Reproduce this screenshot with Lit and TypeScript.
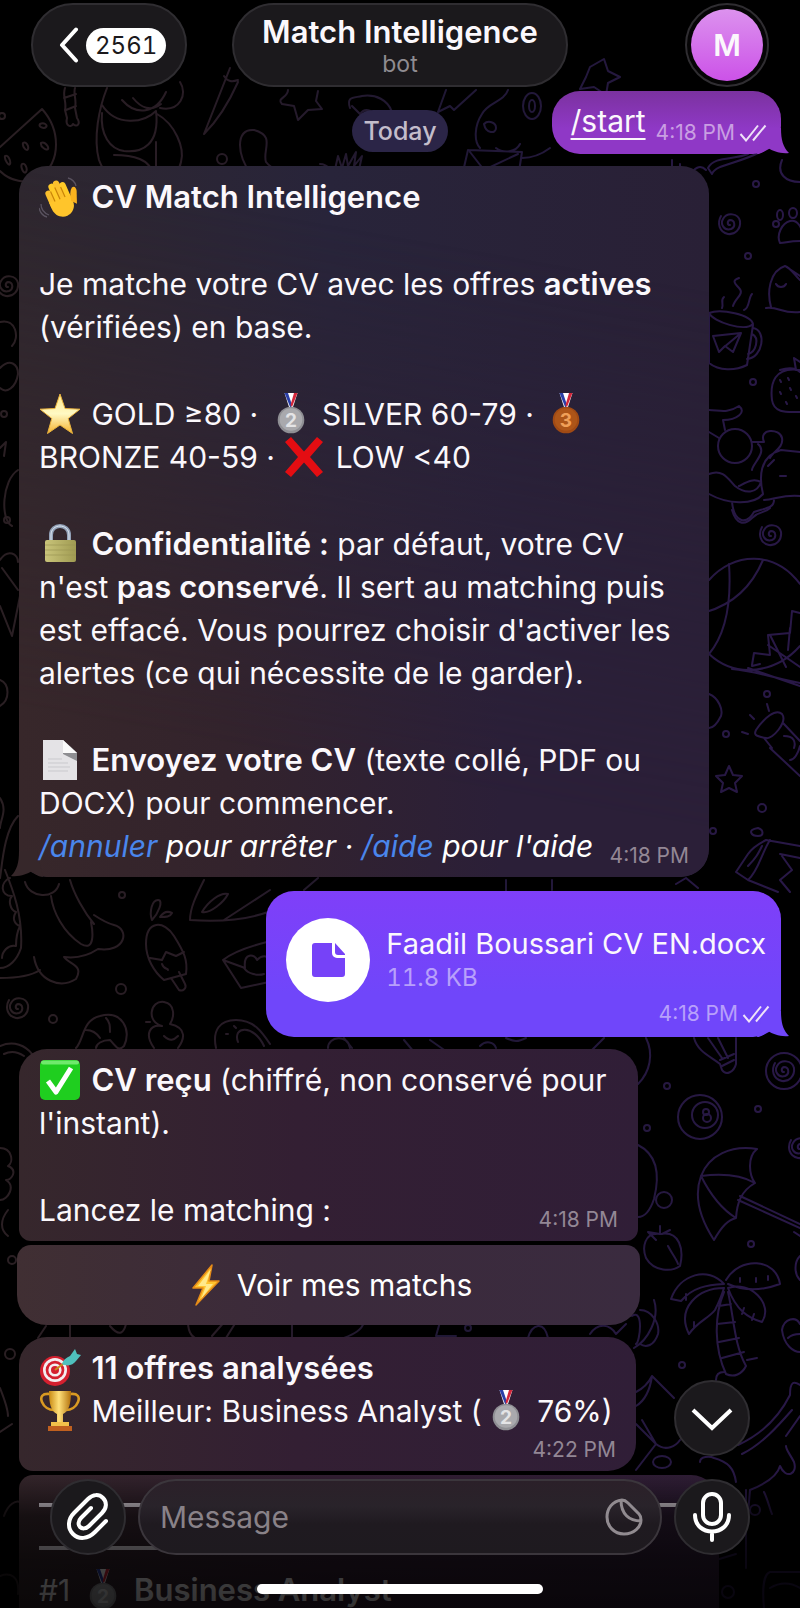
import { LitElement, html, css, svg } from "lit";
import { customElement, state } from "lit/decorators.js";

/* ---------- emoji drawn as small vector pictures ---------- */

const emoji = (label: string, body: unknown, kind = "") => html`<svg
  class="emoji ${kind}" viewBox="0 0 42 42" role="img" aria-label=${label}>${body}</svg>`;

const wave = () => emoji("Main qui salue", svg`
  <g transform="rotate(-24 22 24)">
    <rect x="10" y="10" width="6.400" height="20" rx="3.200" fill="#fbc02d"/>
    <rect x="15.500" y="5" width="6.400" height="24" rx="3.200" fill="#ffca28"/>
    <rect x="21" y="4" width="6.400" height="24" rx="3.200" fill="#fbc02d"/>
    <rect x="26.500" y="8" width="6" height="20" rx="3" fill="#ffca28"/>
    <path d="M10 22h22.500v8c0 6-5 11-11 11S10 36 10 29z" fill="#ffc52b"/>
    <path d="M31 29c1-6 3-10 6-12 3-1 4 2 3 5l-5 12z" fill="#f9b21e"/>
    <path d="M15.900 12v11M21.400 10v13M26.900 12v11" stroke="#c98308" stroke-width="1.200" fill="none"/>
  </g>
  <path d="M2 28c0 5 3 9 8 11M0 32c1 4 4 8 8 9M29 2c4 1 7 4 8 8" stroke="#5a5360" stroke-width="1.300" fill="none"/>`);

const star = () => emoji("Étoile", svg`
  <path d="M21 1l5 14.500 15 .7-11.800 9.300 4.300 15L21 32 8.500 40.500l4.300-15L1 16.200l15-.7z" fill="url(#e-star)" stroke="#e9b23c" stroke-width="1" stroke-linejoin="round"/>`);

const medal = (rank: number) => emoji(`Médaille ${rank}`, svg`
  <path d="M14.500 0h13L23 14h-4z" fill="#fff"/>
  <path d="M14.500 0h3.500l4 12-1.500 3z" fill="#2a3fa8"/>
  <path d="M27.500 0H24l-3.500 12 1.500 2z" fill="#d3263a"/>
  <circle cx="21" cy="27" r="13.300" fill=${rank === 2 ? "#8f8f94" : "#a04a14"}/>
  <circle cx="21" cy="26.500" r="11.300" fill=${rank === 2 ? "#a9a9ad" : "#ad5518"}/>
  <text x="21" y="33.500" text-anchor="middle" font-size="19" font-weight="700" fill=${rank === 2 ? "#e4e4e6" : "#f0a058"}>${rank}</text>`, "medal");

const cross = () => emoji("Croix", svg`
  <path d="M8 1l13 14.500L34 1l6 5-13 15 13 15-6 5-13-14.500L8 41l-6-5 13-15L2 6z" fill="#e40d12"/>`);

const lock = () => emoji("Cadenas", svg`
  <path d="M12 19v-7c0-12 18-12 18 0v7" fill="none" stroke="#93a2b8" stroke-width="4"/>
  <path d="M12 19v-7c0-12 18-12 18 0v7" fill="none" stroke="#dfe8f3" stroke-width="1"/>
  <rect x="6" y="17" width="31" height="22" rx="2" fill="url(#e-lock)"/>
  <path d="M6 22h31M6 27h31M6 32h31" stroke="#9c9754" stroke-width=".7"/>`);

const page = () => emoji("Document", svg`
  <path d="M4 1h20l14 13v27H4z" fill="#e4e3e6"/>
  <path d="M24 1l14 13v8L24 15z" fill="#8e8e92"/>
  <path d="M24 1l14 13H24z" fill="#fafafa"/>
  <path d="M9 20h14M9 24h20M9 28h22M9 32h20" stroke="#c9c9cd" stroke-width="1"/>`);

const check = () => emoji("Validé", svg`
  <rect x="1" y="1" width="40" height="40" rx="5" fill="#1fce1f"/>
  <rect x="2" y="1.500" width="38" height="4" rx="2" fill="#6fe96c"/>
  <path d="M9 22l8 11L32 9" fill="none" stroke="#fff" stroke-width="5" stroke-linejoin="round"/>`);

const bolt = () => emoji("Éclair", svg`
  <path d="M27 1L8 24h10l-7 17 23-24H24z" fill="#ffc42e" stroke="#e58a17" stroke-width="1.500" stroke-linejoin="round"/>
  <path d="M26 5L13 22h8l-5 13 12-15h-7z" fill="#ffe98a"/>`);

const target = () => emoji("Cible", svg`
  <circle cx="16" cy="24" r="15" fill="#d4202f"/>
  <circle cx="16" cy="23" r="12" fill="#f4eef0"/><circle cx="16" cy="23" r="9.300" fill="#d4202f"/>
  <circle cx="16" cy="23" r="6.600" fill="#f4eef0"/><circle cx="16" cy="23" r="4" fill="#d4202f"/>
  <path d="M16 23L33 10" stroke="#c98a1b" stroke-width="2"/>
  <path d="M23 17c1-4 4-6 8-8l5-7 2 5 4 1-5 6c-3 4-8 6-14 3z" fill="#4fc0bd"/>`);

const trophy = () => emoji("Trophée", svg`
  <path d="M11 4C3 3 1 7 3 12s7 8 12 8M31 4c8-1 10 3 8 8s-7 8-12 8" fill="none" stroke="#d99a22" stroke-width="2.600"/>
  <path d="M10 1h22c0 13-2 20-8 23v9h-6v-9C12 21 10 14 10 1z" fill="url(#e-cup)"/>
  <rect x="12" y="32" width="18" height="4" fill="#f2c14a"/>
  <path d="M9 36h24v5H9z" fill="#c0601f"/>`);

/* ---------- interface icons ---------- */

const ticks = () => html`<svg class="ticks" viewBox="0 0 28 18" aria-label="Lu" role="img">
  <path d="M1.500 10l5.500 6.500L19 1.500M14 16.500L26.500 1.500"/></svg>`;

const tail = (side: string) => html`<svg class="tail ${side}" viewBox="0 0 32 26" aria-hidden="true">
  <path d="M6 0H24C24 12 26 19 32 25C23 26 16 23 11 20C8 23 4 26 0 26Z"/></svg>`;

const spiral = (x: number, y: number) => svg`
  <path d="M${x} ${y}c-3 0-3-4 0-5 5 0 6 7 1 9-7 2-11-5-8-10 4-7 15-6 17 2 1 8-5 14-12 13-9-2-11-11-7-18"/>`;

const dots: [number, number, number][] = [
  [222, 159, 5], [756, 184, 3], [748, 256, 3], [753, 382, 3], [767, 694, 3], [726, 734, 3],
  [762, 808, 4], [713, 831, 3], [122, 895, 3], [121, 989, 5], [53, 1019, 4], [667, 1086, 3],
  [758, 1109, 3], [647, 1128, 3], [751, 1244, 3], [682, 1365, 3], [468, 1328, 3], [4, 414, 3],
  [7, 520, 3], [755, 1510, 5], [728, 1592, 6], [2, 116, 3], [12, 1260, 4], [10, 1354, 5],
];

const wallpaper = () => html`<svg class="wallpaper" viewBox="0 0 800 1608" preserveAspectRatio="xMidYMin slice" aria-hidden="true">
  <defs>
    <linearGradient id="ink" gradientUnits="userSpaceOnUse" x1="0" y1="0" x2="800" y2="0">
      <stop offset="0" stop-color="#2a1f23"/><stop offset=".25" stop-color="#281c25"/>
      <stop offset=".55" stop-color="#201835"/><stop offset="1" stop-color="#291848"/>
    </linearGradient>
    <linearGradient id="e-star" x2="0" y2="1"><stop stop-color="#ffe98a"/><stop offset=".5" stop-color="#fff9c4"/><stop offset="1" stop-color="#f5b32f"/></linearGradient>
  </defs>
  <g fill="none" stroke="url(#ink)" stroke-width="2" stroke-linecap="round" stroke-linejoin="round">
    ${dots.map(([x, y, r]) => svg`<circle cx=${x} cy=${y} r=${r}/>`)}
    <!-- header strip -->
    <path d="M0 147L42 109c18 20 20 52-2 68-14 8-30 4-40-6M40 124c4-2 8 1 6 3s-8 0-6-3zM23 143c3-2 6 3 5 6s-6-2-5-6zM41 143c4-2 8 4 7 6s-8-2-7-6zM5 156c3-2 6 5 5 8s-6-5-5-8zM22 164c3-2 6 5 4 8s-6-5-4-8z"/>
    <path d="M65 88c-3 8 2 14 0 22l2 8c-2 8 4 10 6 6 4 4 8 0 4-6l-2-10c2-8-2-14 0-20M64 98l12-4M66 110l10-4"/>
    <path d="M107 88c-8 20-14 50-8 72 3 9 8 14 14 18M102 105c14 22 42 18 54 6 4 34-14 42-32 40-14-2-24-16-22-38M157 114c18 10 28 34 24 48-2 10-8 14-10 14M114 155c18 0 38 4 38 20M156 142v32M122 100c14 16 34 14 44-8M160 108c20 4 28-14 20-26M133 98c8 10 18 14 28 6"/>
    <path d="M230 68l-26 66c14-14 26-34 34-52M224 76c4 6 8 6 14 4"/>
    <path d="M288 90c0 8-12 8-6 14l12 2 4 14 10-10 14-1-6-8 2-10M350 108c-4-12 4-10 12-12 14-2 26 4 30 16M352 106l8 8c6-8 14-2 18 4"/>
    <path d="M250 172c-12-14-16-44 4-42 22 6 8 20 12 32 6 8 14 8 22 14M320 164c8 0 10 6 16 10M334 174l4-18 4 12 4-14 2 12 8-14-2 14 8-10-4 18"/>
    <path d="M438 112l8-22M438 112l12-6 4 4 22-20M508 90c-4 12-20 12-26 24-8 12-8 28-2 34M484 124c4-4 12-2 12 4s-10 6-12-4zM496 148c8 6 20 4 24-4M468 150l54 2-4 26M468 150l-6 26M470 152l14 18 34-16M522 158c10 0 20-4 28-10"/>
    <ellipse cx="532" cy="106" rx="9" ry="13"/><ellipse cx="532" cy="106" rx="3" ry="6"/>
    <path d="M590 67l14-8 4 12 12 6-12 6-2 12-12-8-14 2 6-12z M672 178v-18M680 178v-14M690 176c4-8 10-12 16-6"/>
    <path d="M712 174l-4-6c6-12 26-8 40-14M712 174c4-10 26-10 48-22M782 160c-6 14 4 22 18 22"/>
    <!-- right column -->
    ${spiral(730, 225)}
    <path d="M780 243c-4-8 2-20 10-22s12 8 12 12M780 243c6 0 8-2 20-2"/><circle cx="776" cy="224" r="3"/><ellipse cx="780" cy="215" rx="3" ry="5"/><ellipse cx="793" cy="213" rx="4" ry="5"/>
    <path d="M771 307c-4-14-2-36 14-41l15 10M766 308c12-2 16 6 34 4M776 284c2 4 8 4 10 0M785 266c6 2 10 10 15 14"/>
    <path d="M733 306c2-8 12-12 6-18s-6-8 0-10M722 308c2-4-2-8 2-11M744 310c6-2 4-12 8-16"/>
    <path d="M709 313c12-5 42 2 44 11-8 8-40-2-44-11v50c10 8 26 8 38 2l6-40M753 328c14 2 10 30-6 31M752 334c8 4 4 18-4 20M713 336l28-3-8 19-8-6-6 6zM741 333l-18 15"/>
    <path d="M780 370c12-4 18 0 20 2M796 370l-2-12 6 4M800 370c-26-4-30 14-28 30 2 14 16 12 28 12M780 380l1 2M788 378l1 2M780 392l1 2M790 388l1 2M786 402l1 2M796 396l1 2"/>
    <circle cx="735" cy="446" r="17"/><path d="M709 410c10 0 18 4 30-4 8 6-2 14-16 14l2 10M709 432l10 6M752 442h12c-6-14 16-14 18-4s-10 14-12 20M758 444c10 8-6 20-6 26M709 474c14-6 20 6 26 12 10 8 22 8 26-4-8-4-14 0-22 4M709 494c18 10 44 12 54 0-4-16-4-38 18-44l19 2M732 502c2 20 14 24 22 10 12-4 20-4 20-12M764 500c10 0 20-6 36-4M768 466l6-6M780 476h6"/>
    <path d="M732 510c4 14 12 16 20 8s12-4 18-10"/>
    ${spiral(771, 536)}
    <path d="M709 580c24-28 66-30 91 4M709 654c20-24 22-60 20-90M706 612c28-8 46-26 57-52M709 654c28 26 68 18 91-8M752 665l2-12 16 2-2-20 22-2 2-22 8 2M760 664l-8 2M770 635l16 32M790 628l-2 22M732 669c24 2 46 10 68 14M748 668l52 18M768 645l32 22"/>
    <path d="M709 694c10 4 14 16 12 22-4 8-8 12-12 12M767 704l2 7M750 715l4 4M742 732l6 2"/>
    <path d="M756 730c8-12 20-22 26-16 6 8-10 26-16 24-12-2-12-4-10-8M772 748l-8-10M783 723l17 18M770 748l30 28M784 736c10 0 12 6 10 12M790 760c4 0 8-6 10-14"/>
    <path d="M729 766l4 9 9 1-7 7 2 9-8-4-8 4 2-9-7-7 9-1z"/>
    <path d="M800 846l-34-6c-8 4-14 8-18 14l-12 18 12 8c10-8 14-28 22-40M748 880l30 12M758 828c6 2 6 8 0 8s-12-6 0-8zM762 846c-4 8-6 12-14 20M780 854l20 4M782 856l10 14-12 10 10 12"/>
    <!-- left edge -->
    ${spiral(8, 287)}
    <path d="M0 322c16-4 20 16 12 24M0 368c10-10 18-4 18 6-2 14-12 20-18 14M0 448l6-6-2 14M18 470c-16 10-18 50-6 56M0 560c8-12 18-6 18 2M0 606l12 30 8-40M2 568l16 22M0 680c10 4 10 20 0 26M0 798c8 12 0 22 0 30M18 816c-14 14-16 50-18 62"/>
    <!-- gap between the welcome and the file -->
    <path d="M25 882c4 16 30 18 34 2M5 870c8 20 18 46 16 78-4 12-12 20-21 20M0 978c24 0 34-4 40-8M34 957c4 24 26 32 42 22 8-14-6-14-12-22 16 2 28-4 34-8 28 4 32-20 16-24-8-2-14-6-20-10M70 880c4 14 14 32 24 44M51 896c2 16 12 36 30 48 14 8 12-12 10-22M10 878c-10 4-10 18 2 18-4 4-2 14 4 16-4 6-2 12 4 14-4 8-4 14-4 20-8-2-14 6-14 12"/>
    <path d="M152 920c-3-8 0-20 6-20s0 14-6 20zM160 917c4-6 8-6 12-4-2 4-6 4-12 4zM146 944c0-24 18-24 28-8 10 16 14 24 12 38l-22 6c-10-8-18-22-18-36zM150 958l12 2 4-8 10 4 8-4M171 978l8 12c4 2 8-2 6-6l-6-12M162 964c2 6 6 4 6 6"/>
    <path d="M204 880c-8 16-14 28-14 40 30 2 56 0 78-8M224 920l46-30M202 912c6-10 18-20 26-18-4 8-18 20-26 18z M267 942c-16 4-34 10-44 18l18 28 28-6M223 960l22 8c-2-16 10-14 12-8 6-6 12-4 14 2M244 968c4 6 14 8 20 6"/>
    ${spiral(18, 1009)}
    <path d="M76 1048c8-8 6-28 24-32 22-6 32 14 24 30-6 6-8 0-14-6-8 0-14 4-14 8M86 1030c6 0 10 2 14 8M106 1018c4 4 4 8 4 14M0 1046c14-6 26 0 32 8M4 1054c8-4 14-2 20 2M154 1048c-10-14-4-24 8-22-16-4-12-26 2-24 12 2 10 16 6 22 18 4 14 16 8 24M150 1022h-4M164 1036c6 6 10 4 14 0M216 1048c-4-18 4-28 20-28 18 0 26 12 34 24M238 1042c-6-16 16-18 26 4M226 1034h2M234 1026l2 2"/>
    <path d="M328 1048c0-12 20-14 22 0M344 1038l8 10M404 1040l10 12M430 1040l20 14M480 1046c6-6 14-4 16 2M506 1038c8 4 12 4 20 0M604 1038l-16 16M506 880v12M552 880v10M318 878l-14 12M676 884l10-6 12 10"/>
    <!-- right side under the file -->
    <path d="M646 1038c8 16 4 34-8 46M694 1038c4 14 16 18 26 26l2 6c4 6 12 2 14-6v-26M708 1038l14 20M718 1038l10 20M720 1060l14-6M722 1066l12-6"/>
    ${spiral(784, 1072)}<circle cx="784" cy="1071" r="18"/>
    <circle cx="700" cy="1117" r="22"/><circle cx="705" cy="1115" r="13"/><circle cx="706" cy="1112" r="3"/><circle cx="707" cy="1118" r="4"/>
    ${spiral(800, 1149)}
    <path d="M638 1145c24 12 20 38 16 54-4 12-10 18-16 18"/><circle cx="664" cy="1200" r="8"/>
    <path d="M757 1149c-26-4-48 6-56 27-8 22 0 44 13 64M757 1149c-10 8-8 26-2 34-14-8-30-10-54-7M701 1176c10 20 22 34 35 42-8 2-14 8-22 22M755 1183c-14 8-18 20-19 35M738 1200l62 28M740 1196l60 28M794 1232l6 4"/>
    <path d="M660 1234c-16-2-18 14-14 24 8 14 26 14 34 8 4-16 0-36-20-32zM660 1234l-12-2 8 8M660 1234v-8M662 1234l8-4M668 1246c4 8 8 12 10 18"/>
    <path d="M724 1284c-16-18-44-10-53 15l10 2c12-14 26-16 43-17zM726 1280c14-24 50-22 54 4-16 6-34 8-52 0M724 1288c-26 0-48 20-35 46 8-12 20-16 26-24 4-8 6-12 9-22zM728 1288c22-8 46 16 34 34-14-4-26-12-34-34M724 1292c-10 24-10 56 2 82 8 4 16 0 20-8-12-22-12-48-18-74M719 1306l12-2M717 1324l18-2M719 1342l20-4M722 1358l22-6M716 1380c0-6 4-8 8-8M747 1360l10-2M686 1300v-6M694 1328v-6M740 1282v-4M756 1282v-4M768 1280v-4M744 1308l-2 6M754 1314l-2 6"/>
    <path d="M640 1310c12 0 20 14 18 24-4 12-12 14-18 10M632 1316c12-8 8 26 4 28M800 1256c-6 6-6 18 0 24M782 1330c2-12 14-14 18-6M782 1330c2 16 12 22 18 22M788 1338c4-4 8-4 12-4"/>
    <path d="M636 1406c10-6 14-16 16-30l22 22M652 1376c-4 8-8 12-16 16M636 1424l20 20-20 26M656 1444l-14-24M656 1444c10 8 20 2 24-4"/><ellipse cx="662" cy="1462" rx="9" ry="6"/>
    <path d="M700 1462c0-6 10-6 14-4 14 4 20 10 22 24M738 1445c26-12 42-30 52-50 0-14 4-14 10-10M742 1454c20-10 36-28 50-44M750 1490c20-8 28-16 30-24 6 14 18 8 14-4-4-8-8-12-8-16M750 1490l-2 24M786 1436l14-20M764 1492c4 8 6 18 8 22"/>
    <path d="M764 1608c-2-20 0-34 6-36h30M770 1588c10-6 20-6 30 0M4 1516c4-12 12-16 16-14M0 1576c10-4 20 0 18 18M746 1490v78M716 1560l20-6"/>
    <!-- gap above the results -->
    <path d="M46 1326l-8 12M70 1318v20M110 1326c10 12 14 6 16-2M188 1322c0 12 6 18 12 16M212 1336l14-16M236 1322l-10 16M292 1322v16M344 1338c10-4 18-8 20-16M440 1322l-4 14h20M528 1338c4-14 16-18 20 0M590 1334c8-12 20-10 26 0l10-10M634 1348c14-8 26-30 20-48"/>
    <path d="M0 1388c4 10 8 20 8 28M0 1432l12-8M0 1148c12 0 14 14 8 18 10 4 4 14-2 14 10 6 2 20-6 20M8 1210c-8 10-8 20 0 26"/>
  </g>
</svg>`;

@customElement("app-root")
export class AppRoot extends LitElement {
  @state() private draft = "";

  static styles = css`
    :host {
      --ink: #fbf8fc;
      --muted: #938795;
      --glass: #1b191c;
      display: block;
      position: relative;
      height: 100vh;
      overflow: hidden;
      background: #000;
      color: var(--ink);
      font-family: Inter, "Liberation Sans", sans-serif;
      font-size: 30px;
      line-height: 43px;
    }
    *, *::before, *::after { box-sizing: border-box; }
    p, h1, h2 { margin: 0; font: inherit; }
    a { color: inherit; }
    button { font: inherit; color: inherit; border: 0; padding: 0; cursor: pointer; }
    svg { display: block; }
    b { font-size: 31px; font-weight: 600; line-height: 40px; }

    .wallpaper { position: absolute; inset: 0; width: 100%; height: 100%; }
    .shades { position: absolute; width: 0; height: 0; }
    .screen { position: relative; display: flex; flex-direction: column; }

    header {
      display: grid;
      grid-template-columns: 1fr auto 1fr;
      align-items: center;
      padding: 3px 31px 4px;
    }
    .glass {
      background: var(--glass);
      border: 2px solid #2f2d31;
      border-radius: 42px;
    }
    .back {
      justify-self: start;
      display: flex;
      align-items: center;
      gap: 7px;
      height: 84px;
      padding: 0 19px 0 26px;
    }
    .chevron { width: 20px; height: 36px; fill: none; stroke: #fff; stroke-width: 4; stroke-linecap: round; stroke-linejoin: round; }
    .count {
      padding: 0 9px;
      border-radius: 18px;
      background: #fff;
      color: #1b191c;
      font-size: 24px;
      font-variant-numeric: tabular-nums;
      line-height: 35px;
    }
    .title {
      height: 84px;
      padding: 8px 28px 0;
      text-align: center;
    }
    .title h1 { font-size: 31px; font-weight: 600; line-height: 38px; }
    .title p { color: #8f8c91; font-size: 23px; line-height: 26px; }
    .avatar {
      justify-self: end;
      display: grid;
      place-items: center;
      width: 84px;
      height: 84px;
      padding: 4px;
      background: #060506;
    }
    .avatar span {
      width: 100%;
      height: 100%;
      border-radius: 50%;
      background: linear-gradient(#dc92ee, #cc52e8);
      font-weight: 600;
      line-height: 72px;
    }

    .chat { display: flex; flex-direction: column; align-items: flex-start; padding: 0 19px; }
    .opening { align-self: stretch; display: grid; grid-template-columns: 1fr auto 1fr; align-items: start; }
    .day {
      grid-column: 2;
      margin-top: 19px;
      padding: 0 11px;
      border-radius: 21px;
      background: #2b2547;
      color: #c3bdcb;
      font-size: 25px;
      font-weight: 500;
      line-height: 42px;
    }
    .bubble { position: relative; width: 100%; border-radius: 28px; }
    .in {
      padding: 10px 20px 9px;
      background: linear-gradient(90deg, #36272c, #331f33 45%, #301e37);
    }
    .welcome {
      display: flex;
      flex-direction: column;
      gap: 44px;
      max-width: 690px;
      margin: 12px 0 14px;
      background: linear-gradient(90deg, #2e272f, #28243a 45%, #292036);
    }
    .welcome::before {
      content: "";
      position: absolute;
      inset: 0;
      border-radius: inherit;
      background: linear-gradient(90deg, #37272a, #33232c 30%, #2b1f38 70%);
      mask-image: linear-gradient(190deg, transparent 15%, #000 80%);
    }
    .welcome > p, .welcome > div { position: relative; }
    .out { width: auto; justify-self: end; align-self: flex-end; fill: var(--fill); }
    .start {
      --fill: #8f38c6;
      display: flex;
      align-items: flex-end;
      gap: 10px;
      height: 63px;
      padding: 0 14px 9px 19px;
      background: linear-gradient(#7b329f, #8f38c6 60%);
    }
    .start a { text-underline-offset: 6px; text-decoration-thickness: 2px; line-height: 48px; }
    .out .time { position: relative; color: #c99ee2; }
    .tail { position: absolute; bottom: 0; width: 32px; height: 26px; }
    .tail.right { right: -8px; }
    .tail.left { left: -8px; transform: scaleX(-1); fill: #36272a; }
    .time { display: flex; align-items: center; gap: 4px; color: var(--muted); font-size: 21px; line-height: 24px; white-space: nowrap; }
    .ticks { width: 28px; height: 18px; fill: none; stroke: #efe2f8; stroke-width: 2; }
    .emoji { display: inline-block; width: 42px; height: 42px; margin-right: 2px; vertical-align: -10px; }
    .medal { margin-left: 3px; }
    .last { display: flex; align-items: flex-end; justify-content: space-between; }
    .last i { color: #fff; }
    .last a { color: #4a86ec; text-decoration: none; }

    .file {
      --fill: #7046fa;
      display: grid;
      grid-template-columns: 84px auto;
      column-gap: 16px;
      padding: 27px 15px 11px 20px;
      margin-bottom: 12px;
      background: linear-gradient(#7f3ff9, #7046fa 70%);
    }
    .disc { display: grid; place-items: center; width: 84px; height: 84px; border-radius: 50%; background: #fff; }
    .disc svg { width: 38px; height: 38px; fill: #7642f8; }
    .meta { padding-top: 4px; }
    .name { font-size: 29px; }
    .size { color: #b8a0fb; font-size: 24px; font-variant-numeric: tabular-nums; line-height: 26px; }
    .file .time { grid-column: 1 / -1; justify-self: end; margin-right: -4px; color: #b8a0fb; }

    .received { max-width: 619px; border-radius: 28px 28px 12px 12px; }
    .received p + p { margin-top: 44px; }
    .action {
      display: flex;
      align-items: center;
      justify-content: center;
      gap: 8px;
      width: 100%;
      max-width: 623px;
      height: 80px;
      margin: 4px -2px 12px;
      border-radius: 14px 14px 30px 30px;
      background: linear-gradient(90deg, #402f33, #3b2a3b 45%, #3a2b3f);
      color: #fff;
    }
    .summary { max-width: 617px; border-radius: 28px 28px 28px 14px; }
    .summary .time { justify-content: flex-end; margin-top: 5px; }
    .offer { max-width: 700px; margin-top: 4px; padding-top: 8px; border-radius: 14px 28px 0 0; }
    .rule { height: 43px; display: flex; align-items: center; }
    .rule::before { content: ""; height: 4px; width: 100%; background: #e5dde6; }
    .rule + .rule::before { width: 42%; }

    footer {
      position: absolute;
      inset: auto 0 0;
      padding: 8px 50px 14px;
      background: linear-gradient(#0000, #0009 45px, #000000bd 90px, #000000cc);
    }
    .composer { display: flex; gap: 12px; }
    .round { position: relative; flex: none; display: grid; place-items: center; width: 76px; height: 76px; }
    .round svg { width: 50px; height: 50px; fill: none; stroke: #fff; stroke-width: 4; stroke-linecap: round; stroke-linejoin: round; }
    .field {
      flex: 1;
      display: flex;
      align-items: center;
      min-width: 0;
      height: 76px;
      padding: 0 16px 0 20px;
      background: linear-gradient(#2b2029, #29232a 35%, #1f1a20 60%, #1e1a1f);
      border-color: #3b363c;
    }
    .field input { flex: 1; min-width: 0; padding: 0; border: 0; outline: 0; background: none; color: #fff; font: inherit; }
    .field input::placeholder { color: #898288; opacity: 1; }
    .sticker { background: none; }
    .sticker svg { width: 40px; height: 40px; fill: none; stroke: #918b90; stroke-width: 3; stroke-linejoin: round; }
    .down { position: absolute; right: 50px; bottom: 152px; }
    .down svg { stroke-linecap: butt; stroke-linejoin: miter; }
    .home { width: 286px; height: 10px; margin: 29px auto 0; border-radius: 5px; background: #fff; }
  `;

  render() {
    return html`
      ${wallpaper()}
      <svg class="shades" aria-hidden="true"><defs>
        <linearGradient id="e-lock"><stop stop-color="#c9c47a"/><stop offset="1" stop-color="#a09b52"/></linearGradient>
        <linearGradient id="e-cup"><stop stop-color="#c98a12"/><stop offset=".45" stop-color="#ffe07a"/><stop offset="1" stop-color="#b4720c"/></linearGradient>
      </defs></svg>
      <div class="screen">
        <header>
          <button class="glass back" aria-label="Retour, 2561 messages">
            <svg class="chevron" viewBox="0 0 20 36"><path d="M17 2.500L3 18l14 15.500"/></svg>
            <span class="count">2561</span>
          </button>
          <div class="glass title"><h1>Match Intelligence</h1><p>bot</p></div>
          <button class="glass avatar" aria-label="Profil"><span>M</span></button>
        </header>

        <main class="chat">
          <div class="opening">
            <span class="day">Today</span>
            <div class="bubble out start">
              ${tail("right")}
              <a href="#start">/start</a>
              <span class="time">4:18 PM${ticks()}</span>
            </div>
          </div>

          <article class="bubble in welcome">
            ${tail("left")}
            <p>${wave()} <b>CV Match Intelligence</b></p>
            <p>Je matche votre CV avec les offres <b>actives</b><br>(vérifiées) en base.</p>
            <p>${star()} GOLD ≥80 · ${medal(2)} SILVER 60-79 · ${medal(3)}<br>BRONZE 40-59 · ${cross()} LOW &lt;40</p>
            <p>${lock()} <b>Confidentialité :</b> par défaut, votre CV<br>n'est <b>pas conservé</b>. Il sert au matching puis<br>est effacé. Vous pourrez choisir d'activer les<br>alertes (ce qui nécessite de le garder).</p>
            <div>
              <p>${page()} <b>Envoyez votre CV</b> (texte collé, PDF ou<br>DOCX) pour commencer.</p>
              <p class="last"><i><a href="#annuler">/annuler</a> pour arrêter · <a href="#aide">/aide</a> pour l'aide</i><span class="time">4:18 PM</span></p>
            </div>
          </article>

          <article class="bubble out file">
            ${tail("right")}
            <span class="disc"><svg viewBox="0 0 38 38"><path d="M6 2h17v10a5 5 0 0 0 5 5h8v16a3 3 0 0 1-3 3H6a3 3 0 0 1-3-3V5a3 3 0 0 1 3-3z"/><path d="M26 2l10 11v1h-7a3 3 0 0 1-3-3z"/></svg></span>
            <div class="meta"><p class="name">Faadil Boussari CV EN.docx</p><p class="size">11.8 KB</p></div>
            <span class="time">4:18 PM${ticks()}</span>
          </article>

          <article class="bubble in received">
            <p>${check()} <b>CV reçu</b> (chiffré, non conservé pour<br>l'instant).</p>
            <p class="last"><span>Lancez le matching :</span><span class="time">4:18 PM</span></p>
          </article>
          <button class="action">${bolt()}<span>Voir mes matchs</span></button>

          <article class="bubble in summary">
            <p>${target()} <b>11 offres analysées</b></p>
            <p>${trophy()} Meilleur: Business Analyst (${medal(2)} 76%)</p>
            <span class="time">4:22 PM</span>
          </article>

          <article class="bubble in offer">
            <div class="rule"></div>
            <div class="rule"></div>
            <p>#1 ${medal(2)} <b>Business Analyst</b></p>
          </article>
        </main>
      </div>

      <button class="glass round down" aria-label="Descendre"><svg viewBox="0 0 50 50"><path d="M6 17l19 18 19-18"/></svg></button>
      <footer>
        <div class="composer">
          <button class="glass round" aria-label="Joindre"><svg viewBox="0 0 50 50"><path d="M43 29L32 40c-7 7-16 8-22 2s-5-15 1-21L25 7c5-5 11-5 15-1s4 10-1 15L26 34c-3 3-7 3-9 1s-2-6 1-9l10-10"/></svg></button>
          <div class="glass field">
            <input aria-label="Message" placeholder="Message" .value=${this.draft}
              @input=${(e: Event) => (this.draft = (e.target as HTMLInputElement).value)}>
            <button class="sticker" aria-label="Autocollants"><svg viewBox="0 0 40 40"><path d="M18 3C8 4 3 12 3 20c0 9 7 17 17 17s17-7 17-14c0-3-1-5-2-6L24 6c-2-2-4-3-6-3zM17 3c0 14 8 21 20 21"/></svg></button>
          </div>
          <button class="glass round" aria-label="Message vocal"><svg viewBox="0 0 50 50"><rect x="16" y="2" width="18" height="30" rx="9"/><path d="M8 23c0 22 34 22 34 0M25 40v8"/></svg></button>
        </div>
        <div class="home"></div>
      </footer>
    `;
  }
}
